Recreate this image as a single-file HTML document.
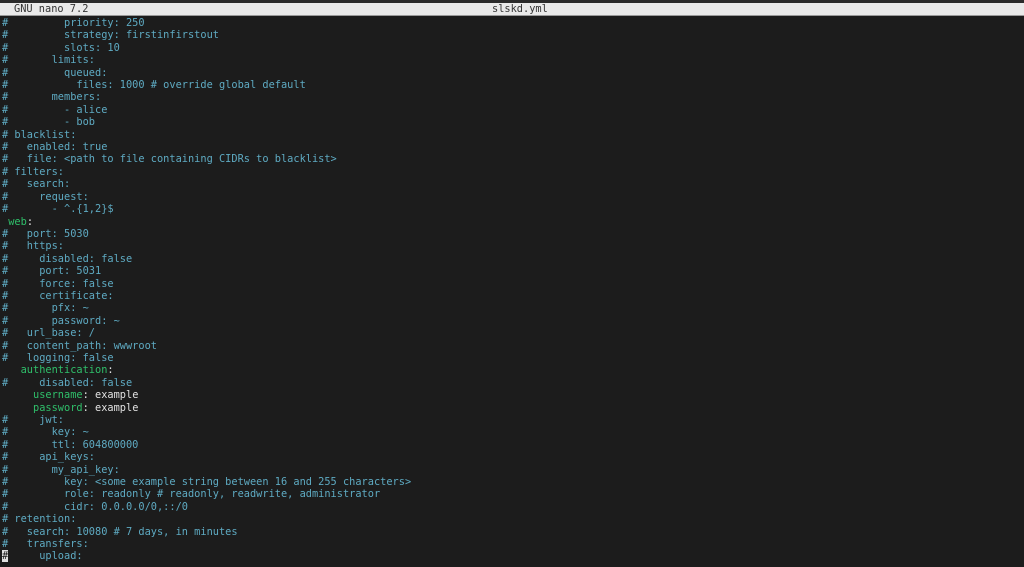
<!DOCTYPE html>
<html><head><meta charset="utf-8"><style>
html,body{margin:0;padding:0;background:#1c1c1c;width:1024px;height:567px;overflow:hidden}
#top{position:absolute;left:0;top:0;width:1024px;height:3px;background:#2a2a2a}
#bar{position:absolute;left:0;top:3px;width:1024px;height:12px;background:#e9e9e9;border-bottom:1px solid #999;font:10.3px/12px "DejaVu Sans Mono",monospace;color:#333}
#bar span{position:absolute;top:0}
pre{position:absolute;left:2px;top:17px;margin:0;font:10.3px/12.4px "DejaVu Sans Mono","Liberation Mono",monospace;color:#5eaac2;white-space:pre}
.g{color:#2fbf6a}.w{color:#e0e0e0}
.cur{background:#e0e0e0;color:#1c1c1c}
</style></head><body>
<div id="top"></div>
<div id="bar"><span style="left:14px">GNU nano 7.2</span><span style="left:492px">slskd.yml</span></div>
<pre>#         priority: 250
#         strategy: firstinfirstout
#         slots: 10
#       limits:
#         queued:
#           files: 1000 # override global default
#       members:
#         - alice
#         - bob
# blacklist:
#   enabled: true
#   file: &lt;path to file containing CIDRs to blacklist&gt;
# filters:
#   search:
#     request:
#       - ^.{1,2}$
 <span class="g">web</span><span class="w">:</span>
#   port: 5030
#   https:
#     disabled: false
#     port: 5031
#     force: false
#     certificate:
#       pfx: ~
#       password: ~
#   url_base: /
#   content_path: wwwroot
#   logging: false
   <span class="g">authentication</span><span class="w">:</span>
#     disabled: false
     <span class="g">username</span><span class="w">: example</span>
     <span class="g">password</span><span class="w">: example</span>
#     jwt:
#       key: ~
#       ttl: 604800000
#     api_keys:
#       my_api_key:
#         key: &lt;some example string between 16 and 255 characters&gt;
#         role: readonly # readonly, readwrite, administrator
#         cidr: 0.0.0.0/0,::/0
# retention:
#   search: 10080 # 7 days, in minutes
#   transfers:
<span class="cur">#</span>     upload:</pre>
</body></html>
